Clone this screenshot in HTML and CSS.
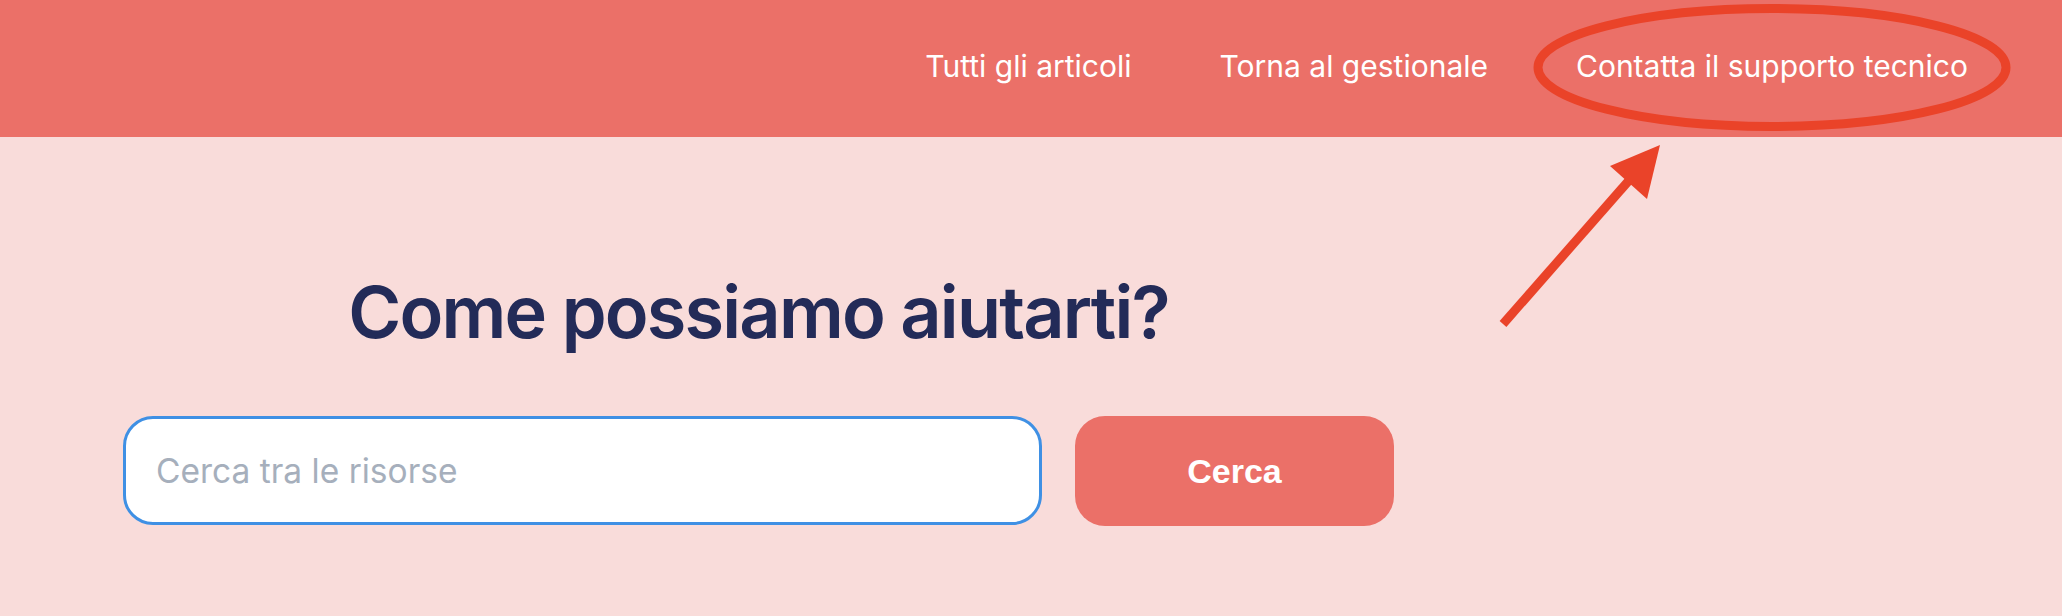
FILE: index.html
```html
<!DOCTYPE html>
<html lang="it">
<head>
<meta charset="utf-8">
<title>Centro assistenza</title>
<link rel="stylesheet" href="styles.css">
</head>
<body>
<header class="topbar">
  <nav class="nav">
    <a class="nav-link" href="#">Tutti gli articoli</a>
    <a class="nav-link" href="#">Torna al gestionale</a>
    <a class="nav-link" href="#">Contatta il supporto tecnico</a>
  </nav>
</header>
<main class="hero">
  <div class="hero-inner">
    <h1 class="hero-title">Come possiamo aiutarti?</h1>
    <form class="search" onsubmit="return false">
      <input class="search-input" type="text" placeholder="Cerca tra le risorse">
      <button class="search-button" type="submit">Cerca</button>
    </form>
  </div>
</main>
<svg class="annotation" width="2062" height="616" viewBox="0 0 2062 616" aria-hidden="true">
  <ellipse cx="1772" cy="67.5" rx="234" ry="59" fill="none" stroke="#ea4329" stroke-width="9"/>
  <line x1="1503" y1="324" x2="1632" y2="177" stroke="#ea4329" stroke-width="9"/>
  <polygon points="1660,145 1610,166 1647,199" fill="#ea4329"/>
</svg>
</body>
</html>
```
FILE: styles.css
```css
html, body {
  margin: 0;
  padding: 0;
}
body {
  background: #f9dcda;
  font-family: Inter, "Noto Sans", "Liberation Sans", sans-serif;
  position: relative;
  min-height: 616px;
  overflow: hidden;
}
.topbar {
  background: #eb7068;
  height: 137px;
  display: flex;
  align-items: center;
  justify-content: flex-end;
  padding-right: 94px;
  box-sizing: border-box;
}
.nav {
  display: flex;
  gap: 88px;
  align-items: center;
  margin-top: -6px;
}
.nav-link {
  color: #ffffff;
  text-decoration: none;
  font-size: 30px;
  font-weight: 400;
  line-height: 1.2;
}
.hero {
  padding-top: 132px;
}
.hero-inner {
  width: 1271px;
  margin-left: 123px;
  display: flex;
  flex-direction: column;
  align-items: center;
}
.hero-title {
  margin: 0;
  font-size: 72px;
  font-weight: 600;
  line-height: 1.2;
  color: #232b58;
  letter-spacing: -1.8px;
}
.search {
  margin-top: 61px;
  display: flex;
  gap: 33px;
  width: 100%;
}
.search-input {
  width: 919px;
  height: 109px;
  box-sizing: border-box;
  border: 3px solid #3f90e4;
  border-radius: 30px;
  background: #ffffff;
  padding: 0 0 0 30px;
  font-family: Inter, "Noto Sans", sans-serif;
  font-size: 33.5px;
  color: #232b58;
  outline: none;
}
.search-input::placeholder {
  color: #a6afbc;
}
.search-button {
  width: 319px;
  height: 110px;
  border: none;
  border-radius: 30px;
  background: #eb7068;
  color: #ffffff;
  font-family: "Liberation Sans", Arial, sans-serif;
  font-size: 34px;
  font-weight: 700;
  cursor: pointer;
}
.annotation {
  position: absolute;
  left: 0;
  top: 0;
  pointer-events: none;
}
```
